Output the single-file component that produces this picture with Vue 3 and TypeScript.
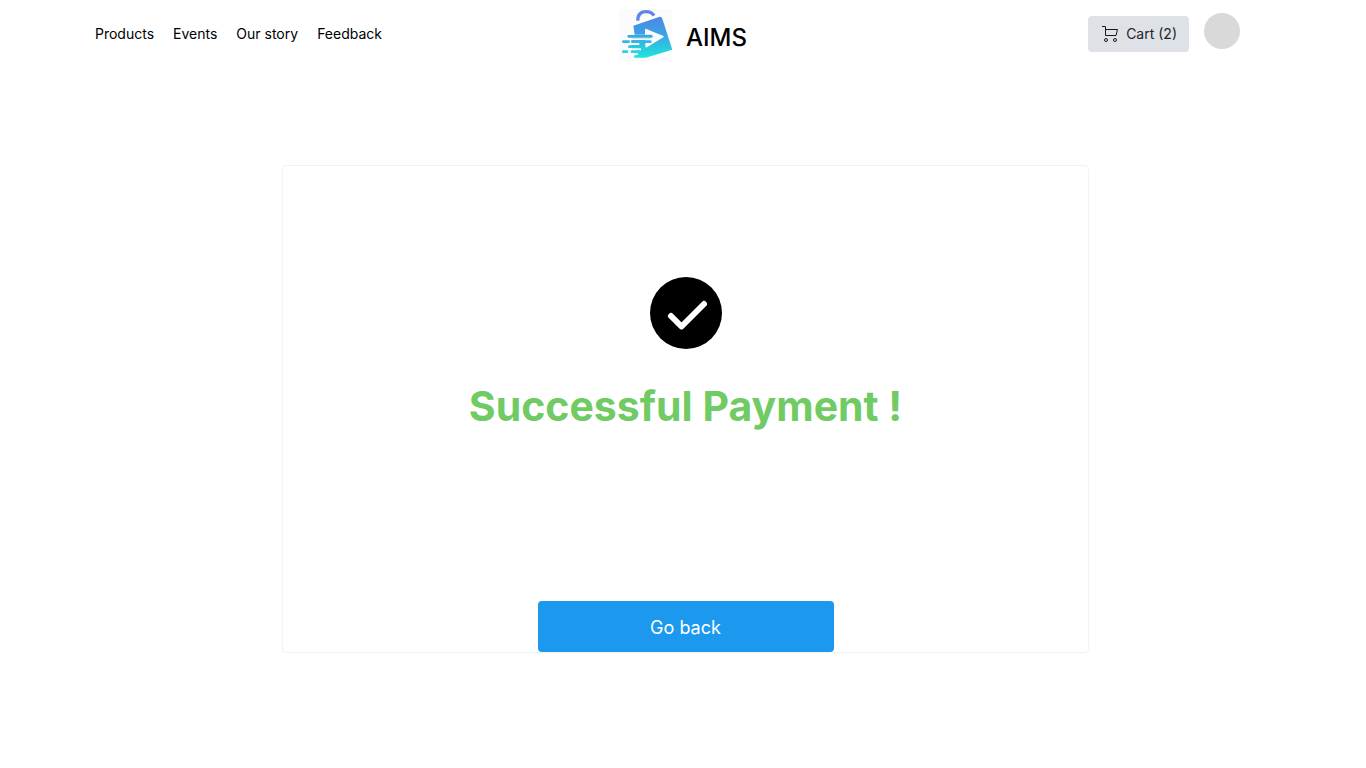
<script setup lang="ts">
interface NavLink {
  label: string
  href: string
}

const links: NavLink[] = [
  { label: 'Products', href: '#products' },
  { label: 'Events', href: '#events' },
  { label: 'Our story', href: '#our-story' },
  { label: 'Feedback', href: '#feedback' },
]

const cartCount = 2
</script>

<template>
  <div class="page">
    <header class="header">
      <nav class="nav" aria-label="Main">
        <a v-for="link in links" :key="link.href" :href="link.href">{{ link.label }}</a>
      </nav>

      <a class="brand" href="#home">
        <svg class="logo" viewBox="27 27 159 156" aria-hidden="true">
          <defs>
            <linearGradient id="bag" gradientUnits="userSpaceOnUse" x1="110" y1="30" x2="110" y2="173">
              <stop offset="0" stop-color="#5a78e6" />
              <stop offset="0.5" stop-color="#3ba2e4" />
              <stop offset="1" stop-color="#1fe5dc" />
            </linearGradient>
          </defs>
          <rect x="27" y="27" width="159" height="156" fill="#fbfbfc" />
          <path d="M84 62 C82 45 92 35 106 35 C119 34 127 39 132 47" fill="none" stroke="#6283ea" stroke-width="10" />
          <path d="M70 77 L147 51 Q154 49 157 56 L186 146 V149 L112 172 Q107 174 102 173 H74 Q70 170 74 166 L84 165 V160 H80 Q76 155 80 151 H93 V145 H65 Q59 140 65 135 H88 V129 H65 V114 H124 Q130 109 124 104 H74 Z" fill="url(#bag)" />
          <path d="M105 89 Q105 85 109 87 L160 108 Q163 110 160 112 L111 142 Q106 144 106 139 V120 H60 V115 H124 Q130 109 124 104 H105 Z" fill="#fbfbfc" />
          <g fill="none" stroke="url(#bag)" stroke-width="8" stroke-linecap="round">
            <path d="M56 109 L124 109.1" />
            <path d="M40 124.9 L56 125" />
            <path d="M67 124.9 L121 125" />
            <path d="M58 140 L86 140.1" />
            <path d="M40 155 L51 155.1" />
            <path d="M66 155 L82 155.1" />
          </g>
        </svg>
        <span class="brand-name">AIMS</span>
      </a>

      <div class="actions">
        <button class="cart" type="button">
          <svg class="cart-icon" viewBox="0 0 16 16" aria-hidden="true">
            <g fill="none" stroke="#16191d" stroke-width="1">
              <path d="M0 .5H3.5V9.5H14L15.5 3.5H3.5" />
              <circle cx="4" cy="14" r="1.5" />
              <circle cx="13" cy="14" r="1.5" />
            </g>
          </svg>
          <span>Cart ({{ cartCount }})</span>
        </button>
        <button class="avatar" type="button" aria-label="Account"></button>
      </div>
    </header>

    <main class="main">
      <section class="card">
        <svg class="check" viewBox="0 0 72 72" aria-hidden="true">
          <circle cx="36" cy="36" r="36" fill="#000" />
          <path d="M21 39 L31.5 49.5 L54 27" fill="none" stroke="#fff" stroke-width="6" stroke-linecap="round" stroke-linejoin="round" />
        </svg>
        <h1>Successful Payment !</h1>
        <button class="back" type="button">Go back</button>
      </section>
    </main>
  </div>
</template>

<style>
body {
  margin: 0;
  background: #fff;
}
</style>

<style scoped>
.page {
  min-height: 100vh;
  box-sizing: border-box;
  font-family: Inter, "Liberation Sans", sans-serif;
  font-size: 14px;
  color: #000;
}

.header {
  display: grid;
  grid-template-columns: 1fr auto 1fr;
  align-items: start;
}

.nav {
  display: flex;
  gap: 19px;
  padding: 24px 0 0 95px;
  line-height: 20px;
  white-space: nowrap;
}

.nav a {
  color: #000;
  text-decoration: none;
}

.brand {
  display: flex;
  gap: 14px;
  padding-top: 9px;
  color: #000;
  text-decoration: none;
}

.logo {
  width: 53px;
  height: 52px;
}

.brand-name {
  padding-top: 13px;
  font-size: 24px;
  line-height: 32px;
  font-weight: 500;
}

.actions {
  display: flex;
  justify-content: flex-end;
  gap: 15px;
  padding: 13px 126px 0 0;
}

button {
  border: 0;
  font-family: inherit;
  cursor: pointer;
}

.cart {
  display: flex;
  align-items: center;
  gap: 8px;
  height: 36px;
  margin-top: 3px;
  padding: 0 12px 0 14px;
  border-radius: 4px;
  background: #dee2e6;
  color: #212529;
  font-size: 14px;
  line-height: 20px;
  white-space: nowrap;
}

.cart-icon {
  width: 16px;
  height: 16px;
}

.avatar {
  width: 36px;
  height: 36px;
  padding: 0;
  border-radius: 50%;
  background: #d9d9d9;
}

.main {
  display: flex;
  justify-content: center;
  padding: 104px 0 48px 5px;
}

.card {
  display: flex;
  flex-direction: column;
  align-items: center;
  box-sizing: border-box;
  width: 100%;
  max-width: 807px;
  padding-top: 111px;
  border: 1px solid #f3f3f3;
  border-radius: 4px;
}

.check {
  width: 72px;
  height: 72px;
}

h1 {
  margin: 32px 0 169px;
  color: #70cb64;
  font-size: 41px;
  line-height: 51px;
  font-weight: 700;
  text-align: center;
}

.back {
  width: 296px;
  height: 51px;
  padding: 2px 0 0;
  border-radius: 4px;
  background: #1c98ef;
  color: #fff;
  font-size: 18px;
  line-height: 24px;
}
</style>
